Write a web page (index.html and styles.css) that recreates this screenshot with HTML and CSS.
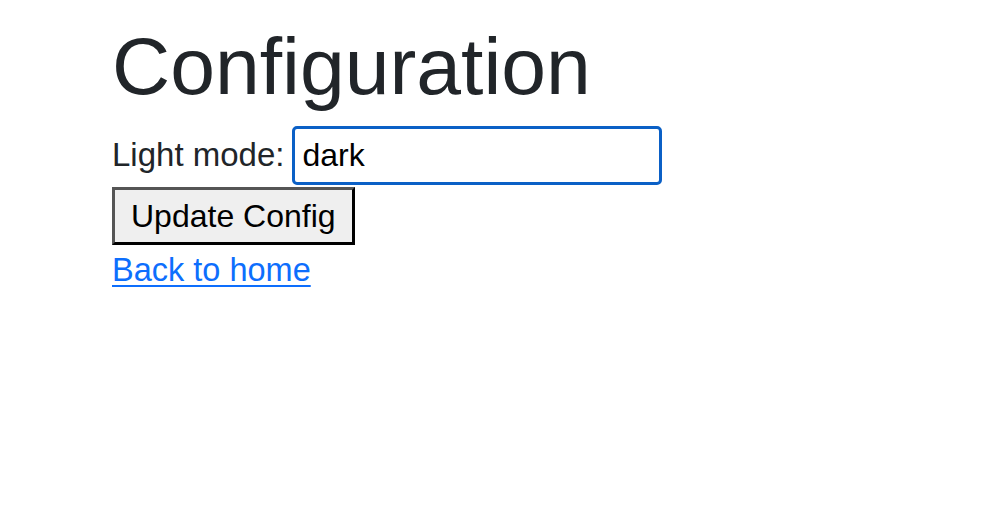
FILE: index.html
```html
<!DOCTYPE html>
<html lang="en">
<head>
<meta charset="utf-8">
<title>Configuration</title>
<link rel="stylesheet" href="styles.css">
</head>
<body>
<main class="page">
  <h1 class="title">Configuration</h1>
  <form class="config-form">
    <div class="field-row">
      <label class="field-label" for="light-mode">Light mode:</label>
      <input class="field-input" id="light-mode" type="text" value="dark">
    </div>
    <button class="submit-btn" type="button">Update Config</button>
  </form>
  <a class="home-link" href="#">Back to home</a>
</main>
</body>
</html>
```

FILE: styles.css
```css
html, body {
  margin: 0;
  padding: 0;
  background: #ffffff;
}

body {
  font-family: "Liberation Sans", Arial, sans-serif;
  font-size: 32px;
  line-height: 48px;
  color: #212529;
}

.page {
  padding: 18px 0 0 112px;
  display: flex;
  flex-direction: column;
  align-items: flex-start;
}

.title {
  margin: 0 0 12px 0;
  font-size: 80.5px;
  line-height: 96px;
  font-weight: 400;
  color: #212529;
}

.config-form {
  display: flex;
  flex-direction: column;
  align-items: flex-start;
  gap: 2px;
  margin: 0;
}

.field-row {
  display: flex;
  align-items: baseline;
  gap: 8px;
}

.field-label {
  font-size: 33px;
  color: #212529;
}

.field-input {
  box-sizing: border-box;
  width: 370px;
  height: 59px;
  margin: 0;
  padding: 0 6px 0 7px;
  border: 3px solid #0b60c6;
  border-radius: 5px;
  outline: none;
  background: #ffffff;
  font-family: "Liberation Sans", Arial, sans-serif;
  font-size: 32px;
  color: #000000;
}

.submit-btn {
  box-sizing: border-box;
  height: 58px;
  margin: 0;
  padding: 0 16px;
  border-width: 3px;
  border-style: solid;
  border-color: #555555 #000000 #000000 #555555;
  border-radius: 0;
  background: #efefef;
  font-family: "Liberation Sans", Arial, sans-serif;
  font-size: 32px;
  line-height: 38px;
  color: #000000;
}

.home-link {
  margin-top: 1px;
  font-size: 32.5px;
  color: #0d6efd;
  text-decoration: underline;
  text-decoration-thickness: 2px;
  text-underline-offset: 4px;
}
```
